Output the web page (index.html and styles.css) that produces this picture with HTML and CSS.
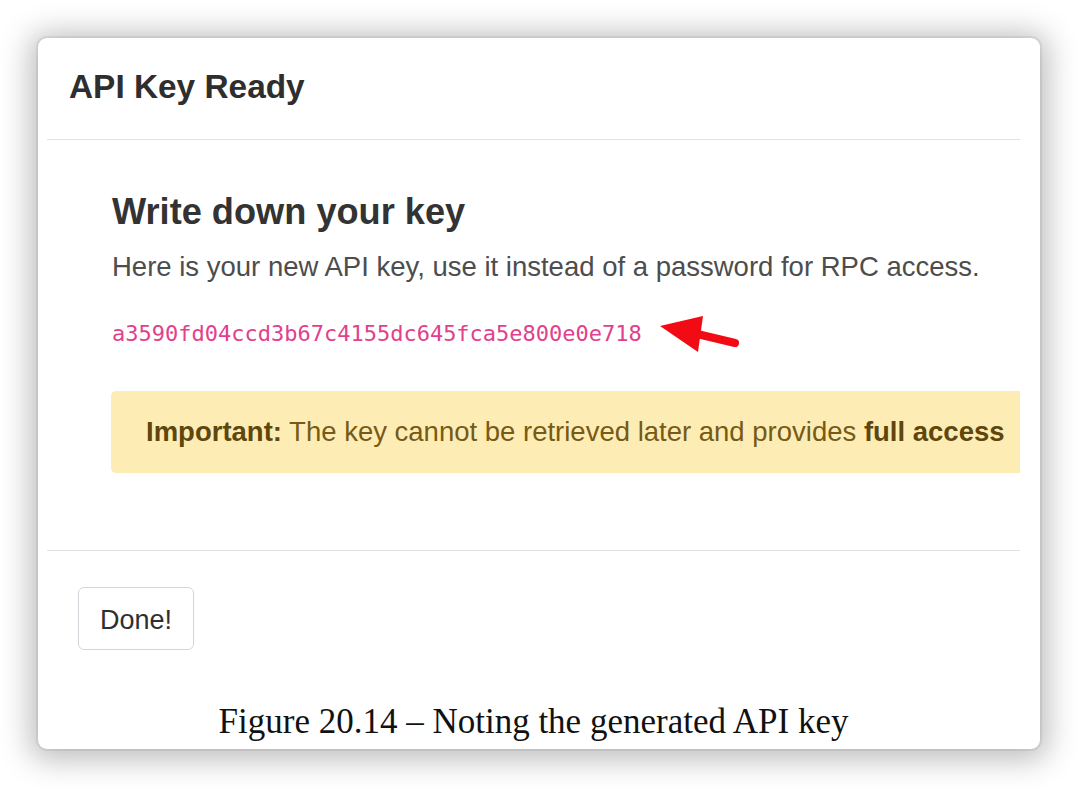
FILE: index.html
```html
<!DOCTYPE html>
<html lang="en">
<head>
<meta charset="utf-8">
<title>API Key Ready</title>
<link rel="stylesheet" href="styles.css">
</head>
<body>
<div class="page">
  <div class="card">
    <div class="inner">
      <div class="modal-header">
        <h1 class="modal-title">API Key Ready</h1>
      </div>
      <div class="modal-body">
        <h2 class="body-title">Write down your key</h2>
        <p class="lead">Here is your new API key, use it instead of a password for RPC access.</p>
        <div class="key-row">
          <code class="key">a3590fd04ccd3b67c4155dc645fca5e800e0e718</code>
          <svg class="arrow" width="90" height="46" viewBox="0 0 90 46" aria-hidden="true">
            <path d="M5 15 L48 5 L43 41 Z" fill="#f20a14"/>
            <line x1="38" y1="22" x2="80" y2="32" stroke="#f20a14" stroke-width="8" stroke-linecap="round"/>
          </svg>
        </div>
        <div class="alert"><strong>Important:</strong> The key cannot be retrieved later and provides <strong>full access</strong></div>
      </div>
      <div class="modal-footer">
        <button class="btn" type="button">Done!</button>
        <p class="caption">Figure 20.14 – Noting the generated API key</p>
      </div>
    </div>
  </div>
</div>
</body>
</html>
```

FILE: styles.css
```css
html, body {
  margin: 0;
  padding: 0;
  background: #ffffff;
}

.page {
  width: 1080px;
  height: 792px;
  padding: 38px 40px 0 38px;
  box-sizing: border-box;
  overflow: hidden;
}

.card {
  width: 1002px;
  height: 711px;
  background: #ffffff;
  border-radius: 9px;
  box-shadow: 0 0 0 2px rgba(0, 0, 0, 0.06), 0 3px 30px 8px rgba(0, 0, 0, 0.26);
  padding: 0 20px 0 9px;
  box-sizing: border-box;
  overflow: hidden;
}

.inner {
  height: 100%;
  overflow: hidden;
  font-family: "Liberation Sans", Arial, sans-serif;
  color: #333333;
}

.modal-header {
  padding: 29px 22px 32px;
  border-bottom: 1px solid #dfe3e7;
}

.modal-title {
  margin: 0;
  font-size: 33.4px;
  line-height: 40px;
  font-weight: 700;
  color: #2e2e2e;
}

.modal-body {
  padding: 50px 0 77px 65px;
  border-bottom: 1px solid #dfe3e7;
}

.body-title {
  margin: 0;
  font-size: 36.2px;
  line-height: 44px;
  font-weight: 700;
  color: #333333;
}

.lead {
  margin: 16px 0 0;
  font-size: 27.5px;
  line-height: 34px;
  color: #4d4d4d;
}

.key-row {
  position: relative;
  margin-top: 35px;
  height: 30px;
}

.key {
  font-family: "DejaVu Sans Mono", "Liberation Mono", monospace;
  font-size: 22px;
  line-height: 30px;
  color: #e2408c;
}

.arrow {
  position: absolute;
  left: 543px;
  top: -8px;
}

.alert {
  margin: 42px -60px 0 -1px;
  padding: 24px 35px;
  background: #fdedb5;
  border-radius: 5px;
  font-size: 27.5px;
  line-height: 34px;
  color: #775a16;
  white-space: nowrap;
}

.alert strong {
  color: #5f460c;
}

.modal-footer {
  padding: 36px 0 0 31px;
}

.btn {
  display: block;
  width: 116px;
  height: 63px;
  padding: 3px 0 0;
  background: #ffffff;
  border: 1px solid #d3d7db;
  border-radius: 6px;
  font-family: "Liberation Sans", Arial, sans-serif;
  font-size: 27px;
  color: #2f2f2f;
}

.caption {
  margin: 52px 0 0 -31px;
  text-align: center;
  font-family: "Liberation Serif", "Times New Roman", serif;
  font-size: 35px;
  line-height: 40px;
  color: #111111;
}
```
